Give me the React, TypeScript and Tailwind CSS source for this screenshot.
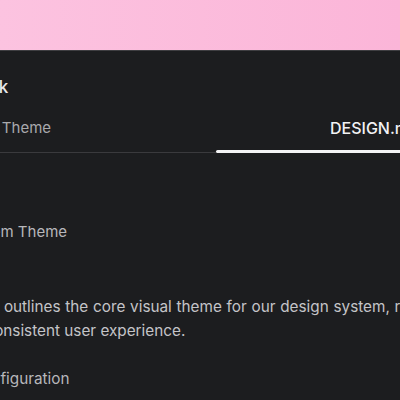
export default function App() {
  return (
    <div className="w-[400px] h-[400px] overflow-hidden bg-gradient-to-r from-[#fcc3e0] to-[#fbb5d8] font-['Inter',sans-serif]">
      <div className="h-[50px]" />
      <div className="h-[350px] bg-[#1c1d1f] border-t border-[#3e3e41] overflow-hidden">
        {/* header */}
        <div className="pt-[22px] text-[17px] leading-[28px] font-medium text-[#e8e8ea] whitespace-nowrap">
          <span className="inline-block ml-[-30px]">Dark</span>
        </div>

        {/* tabs */}
        <div className="flex items-end mt-[15px] whitespace-nowrap">
          <div className="w-[216px] shrink-0 border-b border-[#3a3a3d] pb-[12px] text-[15px] leading-6 text-[#a9a9ad]">
            <span className="inline-block ml-[-55px]">System Theme</span>
          </div>
          <div className="flex-1 shrink-0">
            <div className="pb-[10px] pl-[114px] text-[16px] leading-6 font-medium text-[#f2f2f4]">
              DESIGN.md
            </div>
            <div className="h-[3px] w-[400px] bg-[#f4f4f5] rounded-l-full" />
          </div>
        </div>

        {/* body */}
        <div className="mt-[67px] text-[15px] leading-6 text-[#b7b7bb] whitespace-nowrap">
          <span className="inline-block ml-[-39px]">System Theme</span>
        </div>

        <div className="mt-[51px] text-[15.3px] leading-6 text-[#c4c4c8] whitespace-nowrap">
          <div className="ml-[-109px] [word-spacing:0.45px]">
            This document outlines the core visual theme for our design system, reflecting our brand
          </div>
          <div className="ml-[-95px]">ensuring a consistent user experience.</div>
        </div>

        <div className="mt-[24px] text-[15.3px] leading-6 text-[#b7b7bb] whitespace-nowrap">
          <span className="inline-block ml-[-29px]">Configuration</span>
        </div>
      </div>
    </div>
  );
}
